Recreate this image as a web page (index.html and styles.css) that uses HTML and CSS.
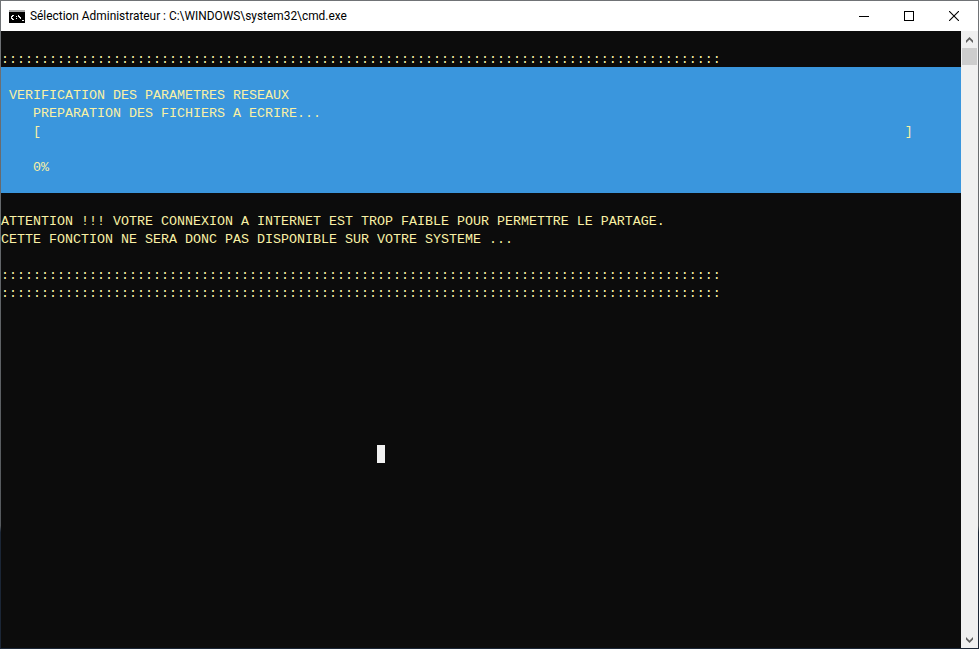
FILE: index.html
```html
<!DOCTYPE html>
<html lang="fr">
<head>
<meta charset="utf-8">
<title>cmd.exe</title>
<link rel="stylesheet" href="styles.css">
</head>
<body>
<div class="window">
  <header class="titlebar">
    <svg class="app-icon" width="16" height="13" viewBox="0 0 16 13">
      <rect x="0" y="0" width="16" height="13" fill="#000"/>
      <rect x="0" y="0" width="16" height="2" fill="#a8a8a8"/>
      <path d="M5 5H3v1H2v2h1v1h2M7 6v1M7 8v1M9 5v1h1v1h1v1h1M13 10h2" stroke="#f0f0f0" stroke-width="1" fill="none" shape-rendering="crispEdges"/>
    </svg>
    <span class="title">Sélection Administrateur : C:\WINDOWS\system32\cmd.exe</span>
    <div class="controls">
      <button class="ctl" aria-label="Réduire">
        <svg width="10" height="10" viewBox="0 0 10 10"><path d="M0 5.5H10" stroke="#000" fill="none"/></svg>
      </button>
      <button class="ctl" aria-label="Agrandir">
        <svg width="10" height="10" viewBox="0 0 10 10"><rect x=".5" y=".5" width="9" height="9" stroke="#000" fill="none"/></svg>
      </button>
      <button class="ctl" aria-label="Fermer">
        <svg width="10" height="10" viewBox="0 0 10 10"><path d="M0 0L10 10M10 0L0 10" stroke="#000" stroke-width="1.1" fill="none"/></svg>
      </button>
    </div>
  </header>
  <div class="client">
    <main class="console">
      <div class="row"></div>
      <div class="row">::::::::::::::::::::::::::::::::::::::::::::::::::::::::::::::::::::::::::::::::::::::::::</div>
      <div class="row blue"></div>
      <div class="row blue"> VERIFICATION DES PARAMETRES RESEAUX</div>
      <div class="row blue">    PREPARATION DES FICHIERS A ECRIRE...</div>
      <div class="row blue">    [                                                                                                            ]</div>
      <div class="row blue"></div>
      <div class="row blue">    0%</div>
      <div class="row blue"></div>
      <div class="row"></div>
      <div class="row">ATTENTION !!! VOTRE CONNEXION A INTERNET EST TROP FAIBLE POUR PERMETTRE LE PARTAGE.</div>
      <div class="row">CETTE FONCTION NE SERA DONC PAS DISPONIBLE SUR VOTRE SYSTEME ...</div>
      <div class="row"></div>
      <div class="row">::::::::::::::::::::::::::::::::::::::::::::::::::::::::::::::::::::::::::::::::::::::::::</div>
      <div class="row">::::::::::::::::::::::::::::::::::::::::::::::::::::::::::::::::::::::::::::::::::::::::::</div>
      <div class="gap"></div>
      <div class="row">                                               <span class="cursor"></span></div>
    </main>
    <aside class="scrollbar">
      <svg class="arrow" width="17" height="17" viewBox="0 0 17 17"><path d="M5 7v2.5L8.5 6 12 9.500V7L8.500 3.500V3.500Z" transform="translate(0 2.5)" fill="#606060"/></svg>
      <div class="thumb"></div>
      <div class="track"></div>
      <svg class="arrow" width="17" height="17" viewBox="0 0 17 17"><path d="M5 10V7.500L8.500 11 12 7.500V10L8.500 13.500Z" transform="translate(0 -1.5)" fill="#606060"/></svg>
    </aside>
  </div>
</div>
</body>
</html>
```
FILE: styles.css
```css
* { box-sizing: border-box; }
html, body { margin: 0; height: 100%; overflow: hidden; background: #0c0c0c; }
.window {
  width: 979px;
  height: 649px;
  display: flex;
  flex-direction: column;
  border: 1px solid #6f7276;
  border-image: linear-gradient(#707376 0, #565a5e 81%, #1b2636 82%, #1b2636 100%) 1;
}
.titlebar {
  height: 30px;
  flex: none;
  display: flex;
  align-items: center;
  background: #fff;
  padding-left: 8px;
}
.app-icon { flex: none; }
.title {
  margin-left: 5px;
  font: 11.9px/16px "Roboto", sans-serif;
  color: #000;
  white-space: pre;
}
.controls { margin-left: auto; margin-right: 2px; display: flex; height: 29px; }
.ctl {
  width: 45px;
  border: 0;
  padding: 0;
  background: #fff;
  display: flex;
  align-items: center;
  justify-content: center;
}
.client { flex: 1; display: flex; min-height: 0; }
.console {
  width: 960px;
  flex: none;
  background: #0c0c0c;
  color: #f9f1a5;
  font-family: "Liberation Mono", monospace;
  font-size: 13.33px;
  line-height: 22px;
  overflow: hidden;
}
.row { height: 18px; white-space: pre; }
.blue { background: #3a96dd; }
.gap { height: 144px; }
.cursor {
  display: inline-block;
  width: 8px;
  height: 18px;
  vertical-align: top;
  background: #f2f2f2;
}
.scrollbar {
  flex: 1;
  display: flex;
  flex-direction: column;
  background: #f0f0f0;
}
.arrow { flex: none; }
.thumb { height: 17px; flex: none; margin: 0 1px; background: #cdcdcd; }
.track { flex: 1; }
```
